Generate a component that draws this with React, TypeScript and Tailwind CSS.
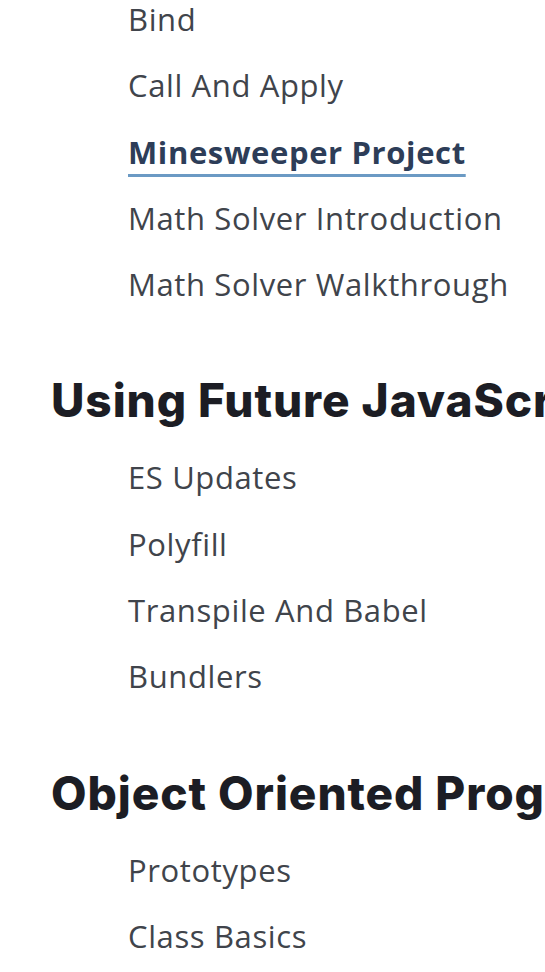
const sections = [
  {
    title: null,
    lessons: [
      "Bind",
      "Call And Apply",
      "Minesweeper Project",
      "Math Solver Introduction",
      "Math Solver Walkthrough",
    ],
  },
  {
    title: "Using Future JavaScript",
    lessons: ["ES Updates", "Polyfill", "Transpile And Babel", "Bundlers"],
  },
  {
    title: "Object Oriented Programming",
    lessons: ["Prototypes", "Class Basics", "Inheritance"],
  },
];

const active = "Minesweeper Project";

// Course outline sidebar, zoomed in - headings run off the right edge.
export default function App() {
  return (
    <div className="h-[972px] w-[545px] overflow-hidden bg-white">
      <div className="-mt-[14px]">
        {sections.map((section, i) => (
          <section key={i}>
            {section.title && (
              <h2 className="mt-[55px] mb-[16px] overflow-hidden whitespace-nowrap pl-[51px] font-['Inter',sans-serif] text-[46px] leading-[56px] font-extrabold tracking-[0.02em] text-[#1c1d24]">
                {section.title}
              </h2>
            )}
            <ul>
              {section.lessons.map((lesson) => (
                <LessonRow key={lesson} label={lesson} active={lesson === active} />
              ))}
            </ul>
          </section>
        ))}
      </div>
    </div>
  );
}

function LessonRow({ label, active }: { label: string; active: boolean }) {
  return (
    <li className="h-[66.3px] overflow-hidden whitespace-nowrap pl-[128px] font-['Open_Sans',sans-serif] text-[31px] leading-[66.3px] tracking-[0.02em]">
      {active ? (
        <span className="font-bold text-[#2d3d58] underline decoration-[#6b9ac4] decoration-[3px] underline-offset-[10px] [text-decoration-skip-ink:none]">
          {label}
        </span>
      ) : (
        <span className="text-[#40444b]">{label}</span>
      )}
    </li>
  );
}
